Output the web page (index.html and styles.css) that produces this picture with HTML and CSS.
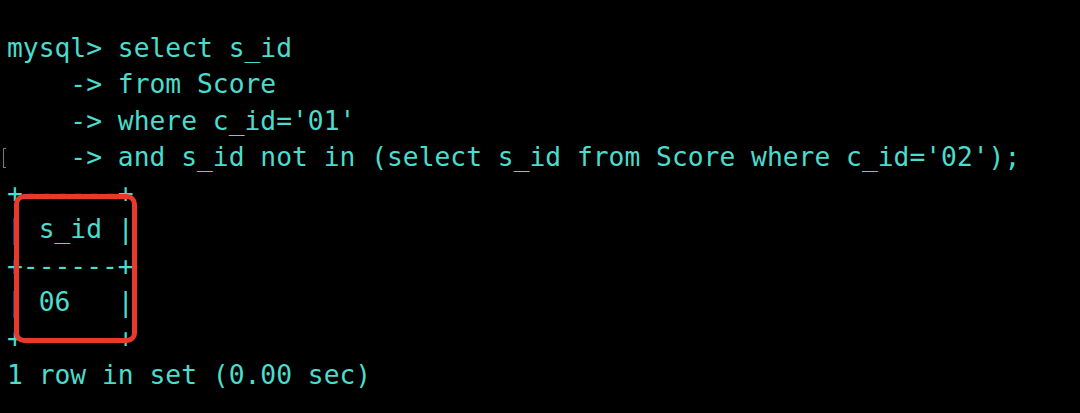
FILE: index.html
```html
<!DOCTYPE html>
<html>
<head>
<meta charset="utf-8">
<link rel="stylesheet" href="styles.css">
</head>
<body>
<main class="term">
  <div class="line">mysql&gt; select s_id</div>
  <div class="line">    -&gt; from Score</div>
  <div class="line">    -&gt; where c_id='01'</div>
  <div class="line marked"><span class="mark"></span>    -&gt; and s_id not in (select s_id from Score where c_id='02');</div>
  <div class="result">
    <div class="line">+------+</div>
    <div class="line">| s_id |</div>
    <div class="line">+------+</div>
    <div class="line">| 06   |</div>
    <div class="line">+------+</div>
    <div class="highlight"></div>
  </div>
  <div class="line">1 row in set (0.00 sec)</div>
</main>
</body>
</html>
```
FILE: styles.css
```css
html, body {
  margin: 0;
  padding: 0;
  background: #000;
}
body {
  width: 1080px;
  height: 413px;
  overflow: hidden;
}
.term {
  display: flex;
  flex-direction: column;
  padding: 30px 0 0 7px;
  font-family: "DejaVu Sans Mono", "Liberation Mono", monospace;
  font-size: 26.3px;
  line-height: 36.3px;
  color: #4adccd;
}
.line {
  white-space: pre;
  height: 36.3px;
}
.marked {
  position: relative;
}
.mark {
  position: absolute;
  left: -4px;
  top: 9px;
  width: 2px;
  height: 18px;
  border: 1.5px solid #7a7a7a;
  border-right: none;
}
.result {
  position: relative;
}
.highlight {
  position: absolute;
  left: 7px;
  top: 19px;
  width: 113px;
  height: 139px;
  border: 5px solid #e83a2b;
  border-radius: 10px;
}
```
